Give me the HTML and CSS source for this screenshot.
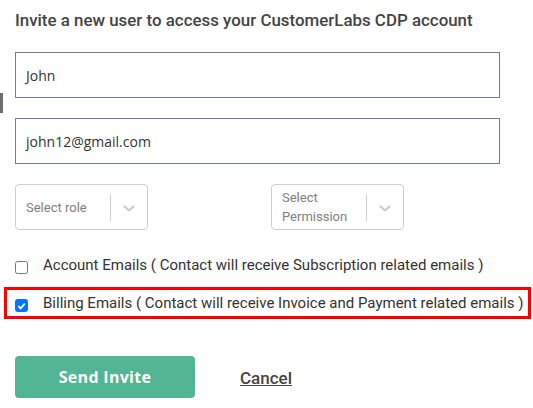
FILE: index.html
```html
<!DOCTYPE html>
<html>
<head>
<meta charset="utf-8">
<link rel="stylesheet" href="styles.css">
</head>
<body>
<div class="edge-mark"></div>
<form class="invite">
  <h1 class="title">Invite a new user to access your CustomerLabs CDP account</h1>
  <div class="field">John</div>
  <div class="field email">john12@gmail.com</div>
  <div class="selects">
    <div class="select">
      <span class="select-text">Select role</span>
      <span class="sep"></span>
      <span class="chev"><svg width="14" height="9" viewBox="0 0 14 9"><path d="M2 2 L7 6.5 L12 2" fill="none" stroke="#c8c8c8" stroke-width="2"/></svg></span>
    </div>
    <div class="select">
      <span class="select-text">Select Permission</span>
      <span class="sep"></span>
      <span class="chev"><svg width="14" height="9" viewBox="0 0 14 9"><path d="M2 2 L7 6.5 L12 2" fill="none" stroke="#c8c8c8" stroke-width="2"/></svg></span>
    </div>
  </div>
  <label class="check">
    <span class="box"></span>
    <span>Account Emails ( Contact will receive Subscription related emails )</span>
  </label>
  <label class="check highlighted">
    <span class="box checked"><svg width="12" height="12" viewBox="0 0 12 12"><path d="M2.6 6.2 L5 8.6 L9.6 3.4" fill="none" stroke="#fff" stroke-width="1.9"/></svg></span>
    <span>Billing Emails ( Contact will receive Invoice and Payment related emails )</span>
  </label>
  <div class="actions">
    <button type="button" class="send">Send Invite</button>
    <a class="cancel">Cancel</a>
  </div>
</form>
</body>
</html>
```
FILE: styles.css
```css
html, body {
  margin: 0;
  padding: 0;
  background: #fff;
}
body {
  width: 533px;
  height: 408px;
  overflow: hidden;
  position: relative;
  font-family: Roboto, "Liberation Sans", sans-serif;
}
.edge-mark {
  position: absolute;
  left: 0;
  top: 93px;
  width: 3px;
  height: 20px;
  background: #6e6e6e;
}
.invite {
  display: flex;
  flex-direction: column;
  padding: 0 0 0 15px;
}
.title {
  margin: 10px 0 0 0;
  font-size: 16.9px;
  font-weight: 500;
  color: #444;
  line-height: 20px;
}
.field {
  box-sizing: border-box;
  width: 485px;
  height: 46px;
  border: 1px solid #6d8196;
  display: flex;
  align-items: center;
  padding-left: 10px;
  font-family: "Open Sans", "Noto Sans", sans-serif;
  font-size: 14px;
  color: #333;
  margin-top: 22px;
}
.field.email {
  margin-top: 20px;
}
.selects {
  display: flex;
  gap: 123px;
  margin-top: 20px;
}
.select {
  box-sizing: border-box;
  width: 133px;
  height: 46px;
  border: 1px solid #cfcfcf;
  border-radius: 4px;
  display: flex;
  align-items: center;
  padding-left: 10px;
}
.select-text {
  width: 84px;
  font-size: 13px;
  line-height: 19px;
  color: #808080;
}
.sep {
  width: 1px;
  height: 27px;
  background: #d0d0d0;
}
.chev {
  flex: 1;
  display: flex;
  justify-content: center;
  padding-top: 2px;
}
.check {
  display: flex;
  align-items: center;
  gap: 15px;
  font-size: 15px;
  color: #333;
  height: 20px;
  margin-top: 25px;
}
.check .box {
  box-sizing: border-box;
  width: 13px;
  height: 13px;
  border: 1px solid #767676;
  border-radius: 2.5px;
  margin-top: 5px;
  flex: none;
  display: flex;
  align-items: center;
  justify-content: center;
}
.check .box.checked {
  background: #0075ff;
  border-color: #0075ff;
}
.check.highlighted {
  margin-left: -11px;
  margin-right: 2px;
  margin-top: 12px;
  height: 32px;
  box-sizing: border-box;
  border: 3px solid #ff0000;
  padding-left: 8px;
}
.actions {
  display: flex;
  align-items: center;
  gap: 45px;
  margin-top: 37px;
}
.send {
  width: 180px;
  height: 42px;
  border: none;
  border-radius: 4px;
  background: #52b594;
  color: #fff;
  font-family: "Open Sans", Roboto, sans-serif;
  font-weight: 700;
  font-size: 16px;
  letter-spacing: 0.3px;
}
.cancel {
  font-size: 17px;
  font-weight: 500;
  color: #444;
  text-decoration: underline;
  margin-top: 2px;
}
```
